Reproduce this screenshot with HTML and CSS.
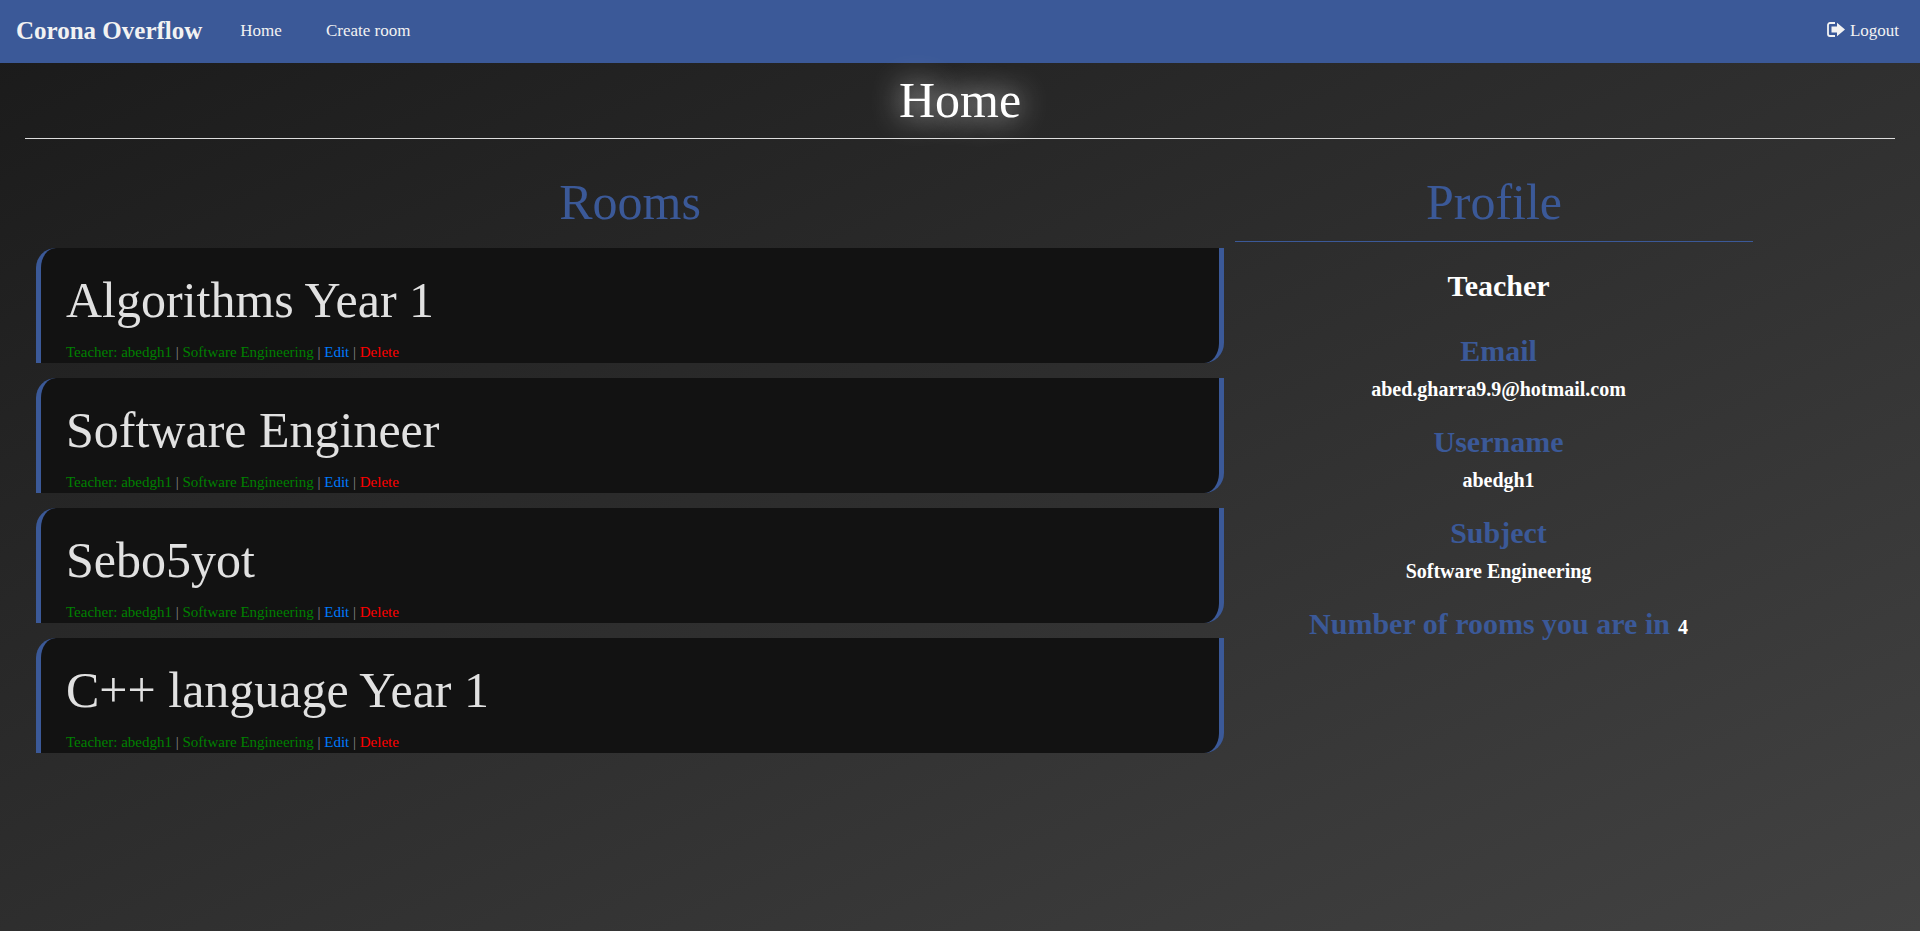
FILE: index.html
```html
<!DOCTYPE html>
<html lang="en">
<head>
<meta charset="utf-8">
<title>Corona Overflow</title>
<link rel="stylesheet" href="styles.css">
</head>
<body>
<nav class="navbar">
  <a class="brand" href="#">Corona Overflow</a>
  <a class="nav-link" href="#">Home</a>
  <a class="nav-link" href="#">Create room</a>
  <a class="nav-link logout" href="#">
    <svg class="logout-icon" viewBox="0 0 18 15" aria-hidden="true">
      <path d="M8 1H3a2 2 0 0 0-2 2v9a2 2 0 0 0 2 2h5" fill="none" stroke="currentColor" stroke-width="1.8"/>
      <path d="M10 .8 18 7.5l-8 6.7V10.500H4.500V4.500H10z" fill="currentColor"/>
    </svg>
    <span>Logout</span>
  </a>
</nav>
<main class="page">
  <h1 class="page-title">Home</h1>
  <hr class="rule">
  <div class="columns">
    <section>
      <h2 class="heading">Rooms</h2>
      <div class="rooms">
        <article class="room">
          <h3 class="room-title">Algorithms Year 1</h3>
          <p class="meta"><span class="info">Teacher: abedgh1</span> | <span class="info">Software Engineering</span> | <a class="edit" href="#">Edit</a> | <a class="delete" href="#">Delete</a></p>
        </article>
        <article class="room">
          <h3 class="room-title">Software Engineer</h3>
          <p class="meta"><span class="info">Teacher: abedgh1</span> | <span class="info">Software Engineering</span> | <a class="edit" href="#">Edit</a> | <a class="delete" href="#">Delete</a></p>
        </article>
        <article class="room">
          <h3 class="room-title">Sebo5yot</h3>
          <p class="meta"><span class="info">Teacher: abedgh1</span> | <span class="info">Software Engineering</span> | <a class="edit" href="#">Edit</a> | <a class="delete" href="#">Delete</a></p>
        </article>
        <article class="room">
          <h3 class="room-title">C++ language Year 1</h3>
          <p class="meta"><span class="info">Teacher: abedgh1</span> | <span class="info">Software Engineering</span> | <a class="edit" href="#">Edit</a> | <a class="delete" href="#">Delete</a></p>
        </article>
      </div>
    </section>
    <section class="profile">
      <header class="profile-head">
        <h2 class="heading">Profile</h2>
      </header>
      <p class="role">Teacher</p>
      <dl class="details">
        <div><dt class="label">Email</dt><dd class="value">abed.gharra9.9@hotmail.com</dd></div>
        <div><dt class="label">Username</dt><dd class="value">abedgh1</dd></div>
        <div><dt class="label">Subject</dt><dd class="value">Software Engineering</dd></div>
        <div class="count"><dt class="label">Number of rooms you are in</dt><dd class="value">4</dd></div>
      </dl>
    </section>
  </div>
</main>
</body>
</html>
```
FILE: styles.css
```css
* { box-sizing: border-box; }

body {
  margin: 0;
  min-height: 100vh;
  font-family: "Liberation Serif", "Times New Roman", serif;
  color: #fff;
  background: linear-gradient(to bottom right, #1a1a1a, #424242) no-repeat;
}

h1, h2, h3, p, dl, dd { margin: 0; }
a { text-decoration: none; }

.navbar {
  display: flex;
  align-items: center;
  gap: 44px;
  height: 63px;
  padding: 0 21px 2px 16px;
  background: #3b5998;
}
.brand {
  margin-right: -6px;
  font-size: 25px;
  font-weight: bold;
  color: #f2f2f2;
}
.nav-link { font-size: 17px; color: #f2f2f2; }
.logout {
  display: flex;
  align-items: center;
  gap: 5px;
  margin-left: auto;
}
.logout-icon { width: 18px; height: 15px; margin-bottom: 3px; }

.page { padding: 7px 25px 0; }
.page-title {
  font-size: 50px;
  font-weight: normal;
  line-height: 60px;
  text-align: center;
  text-shadow: 0 0 30px #fff;
}
.rule {
  height: 1px;
  margin: 8px 0 33px;
  border: 0;
  background: #ddd;
}

.columns {
  display: grid;
  grid-template-columns: 1188fr 527fr 122fr;
  gap: 11px;
  padding-left: 11px;
}
.heading {
  font-size: 50px;
  font-weight: normal;
  line-height: 60px;
  text-align: center;
  color: #3b5998;
}

.rooms {
  display: grid;
  gap: 15px;
  margin-top: 16px;
}
.room {
  padding: 22px 25px 0;
  border: solid #3b5998;
  border-width: 0 5px;
  border-radius: 20px 0;
  background: #121212;
}
.room-title {
  font-size: 50px;
  font-weight: normal;
  line-height: 60px;
  color: #e1e1e1;
}
.meta {
  margin-top: 11px;
  font-size: 15px;
  line-height: 22px;
  color: #888;
}
.info { color: #008000; }
.edit { color: #007bff; }
.delete { color: #f00; }

.profile { font-weight: bold; text-align: center; }
.profile-head {
  margin-right: 9px;
  padding-bottom: 9px;
  border-bottom: 1px solid #3b5998;
}
.role { margin-top: 26px; font-size: 30px; line-height: 36px; }
.details {
  display: grid;
  gap: 23px;
  margin-top: 29px;
}
.label { font-size: 30px; line-height: 36px; color: #3b5998; }
.value { margin-top: 8px; font-size: 20px; line-height: 24px; }
.count {
  display: flex;
  justify-content: center;
  align-items: baseline;
  gap: 8px;
}
.count .value { margin-top: 0; }
```
